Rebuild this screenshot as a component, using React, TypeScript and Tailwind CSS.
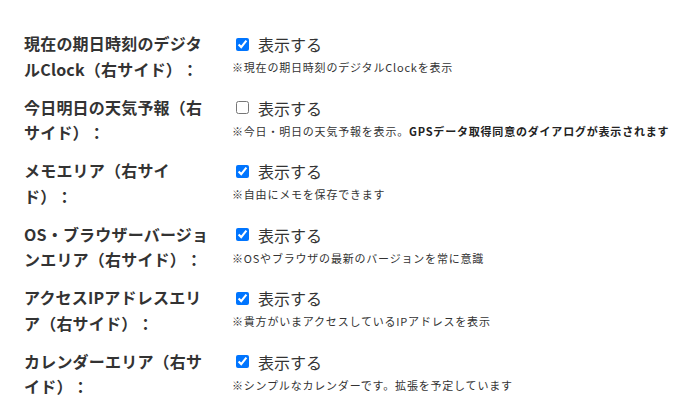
import { ReactNode } from 'react';

type Setting = {
    label: string;
    checked: boolean;
    note: ReactNode;
};

const settings: Setting[] = [
    { label: '現在の期日時刻のデジタルClock（右サイド）：', checked: true, note: '※現在の期日時刻のデジタルClockを表示' },
    {
        label: '今日明日の天気予報（右サイド）：',
        checked: false,
        note: (
            <>
                ※今日・明日の天気予報を表示。
                <span className="font-bold text-[#222]">GPSデータ取得同意のダイアログが表示されます</span>
            </>
        ),
    },
    { label: 'メモエリア（右サイド）：', checked: true, note: '※自由にメモを保存できます' },
    { label: 'OS・ブラウザーバージョンエリア（右サイド）：', checked: true, note: '※OSやブラウザの最新のバージョンを常に意識' },
    { label: 'アクセスIPアドレスエリア（右サイド）：', checked: true, note: '※貴方がいまアクセスしているIPアドレスを表示' },
    { label: 'カレンダーエリア（右サイド）：', checked: true, note: '※シンプルなカレンダーです。拡張を予定しています' },
];

export default function App() {
    return (
        <div
            className="min-h-[416px] w-full bg-white pl-[24px] pt-[31px] text-[#333] [text-spacing-trim:space-all]"
            style={{ fontFamily: '"Noto Sans CJK JP", "Noto Sans", sans-serif' }}
        >
            <div className="flex flex-col gap-[12.4px]">
                {settings.map((item, index) => (
                    <div key={index} className="flex">
                        {/* label column */}
                        <div className="w-[186px] text-[16px] font-bold leading-[25.6px] tracking-[0.2px]">{item.label}</div>

                        {/* value column */}
                        <div className="ml-[22px] flex flex-col">
                            <label className="flex h-[26px] items-center">
                                <input type="checkbox" defaultChecked={item.checked} className="m-0 ml-[4px] h-[13px] w-[13px]" />
                                <span className="ml-[9px] text-[16px] leading-[26px] text-[#333]">表示する</span>
                            </label>
                            <p className="mt-[2px] text-[11px] leading-[16px] tracking-[0.8px] whitespace-nowrap">{item.note}</p>
                        </div>
                    </div>
                ))}
            </div>
        </div>
    );
}
